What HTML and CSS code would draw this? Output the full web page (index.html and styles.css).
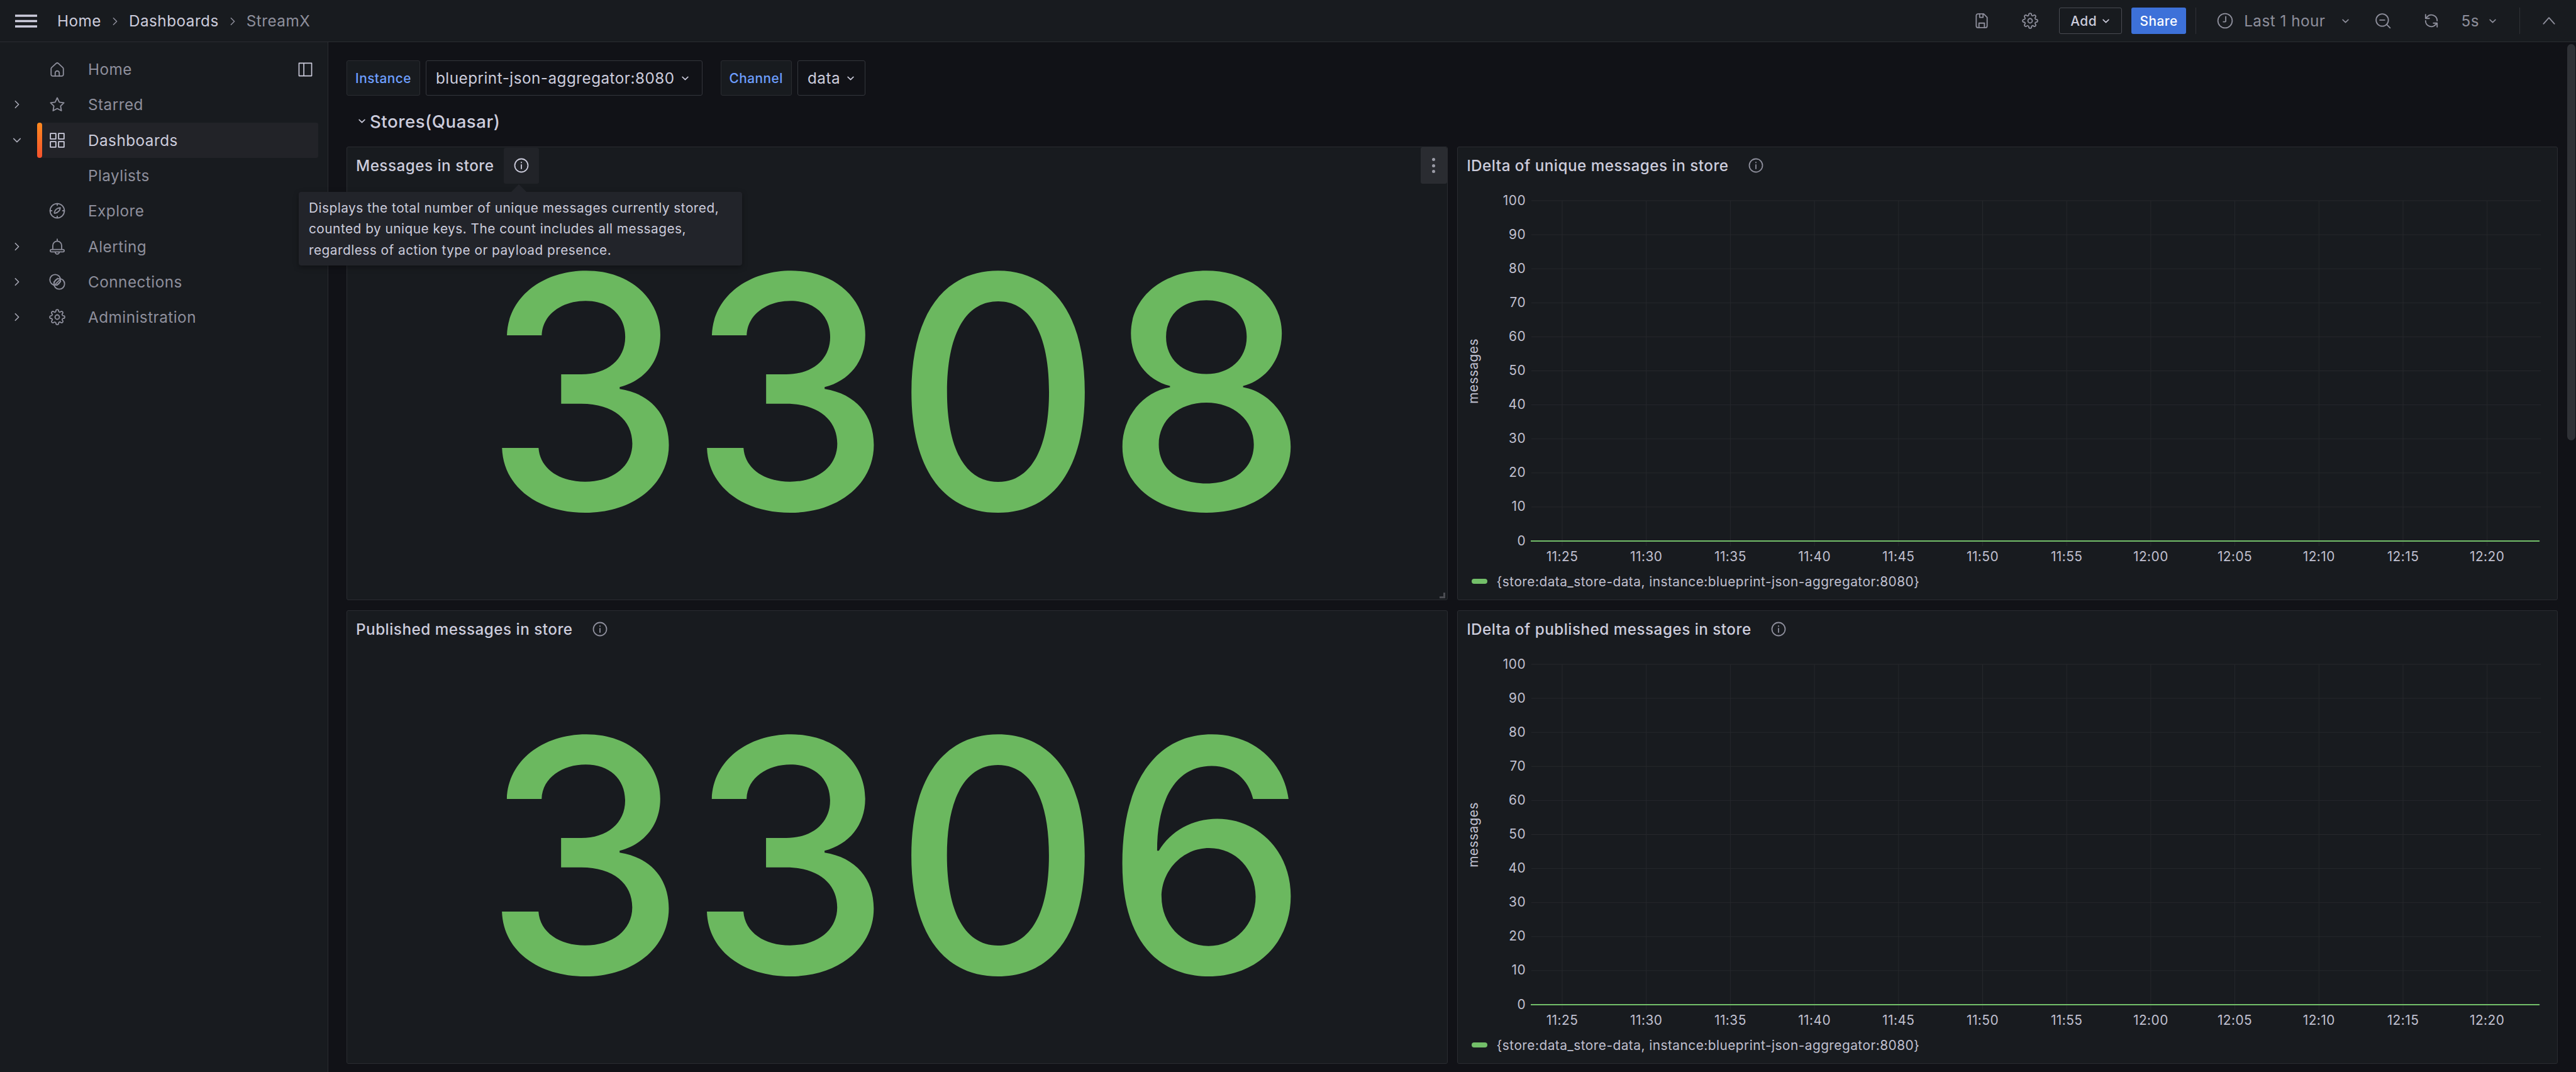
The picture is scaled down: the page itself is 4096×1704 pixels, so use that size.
FILE: index.html
```html
<!DOCTYPE html>
<html lang="en">
<head>
<meta charset="utf-8">
<title>StreamX - Dashboards</title>
<link rel="stylesheet" href="styles.css">
</head>
<body>
<svg class="sprite" aria-hidden="true">
  <symbol id="i-chev" viewBox="0 0 24 24"><path d="M5 8.5l7 7 7-7"/></symbol>
  <symbol id="i-right" viewBox="0 0 24 24"><path d="M8.5 5l7 7-7 7"/></symbol>
  <symbol id="i-up" viewBox="0 0 24 24"><path d="M4 16.5l8-9 8 9"/></symbol>
  <symbol id="i-info" viewBox="0 0 24 24"><circle cx="12" cy="12" r="10.5"/><path d="M12 11v6M12 7v.6"/></symbol>
  <symbol id="i-home" viewBox="0 0 24 24"><path d="M3.8 9.6l6.7-6.2a2.3 2.3 0 0 1 3 0l6.7 6.2a2.6 2.6 0 0 1 .8 1.9v8.3a2.2 2.2 0 0 1-2.2 2.2H5.2A2.2 2.2 0 0 1 3 19.8v-8.3a2.6 2.6 0 0 1 .8-1.9z"/><path d="M9 22v-4.500a3 3 0 0 1 6 0V22"/></symbol>
  <symbol id="i-star" viewBox="0 0 24 24"><path d="M12 2.300l3 6.300 6.800 1-4.900 4.800 1.200 6.800-6.100-3.200-6.100 3.200 1.200-6.800-4.900-4.800 6.800-1z"/></symbol>
  <symbol id="i-grid" viewBox="0 0 24 24"><path d="M2 2h8v8H2zM14 2h8v8h-8zM2 14h8v8H2zM14 14h8v8h-8z"/></symbol>
  <symbol id="i-compass" viewBox="0 0 24 24"><circle cx="12" cy="12" r="10.500"/><path d="M12 1.500v2.500M12 20v2.500M1.500 12H4M20 12h2.500"/><path d="M16.500 7.500c-.4 4.200-2.800 7-7.500 8.100-1.200.3-1.500-.3-1.200-1.200 1.200-4.300 4-6.500 8.700-6.900z"/></symbol>
  <symbol id="i-bell" viewBox="0 0 24 24"><path d="M12 1v3M5.500 16v-5.500a6.500 6.500 0 0 1 13 0V16"/><path d="M3.500 16.300h17a1.500 1.500 0 0 1 0 3.400h-17a1.500 1.500 0 0 1 0-3.400zM9 20a3 3 0 0 0 6 0"/></symbol>
  <symbol id="i-conn" viewBox="0 0 24 24"><circle cx="9" cy="9" r="7.800"/><circle cx="15" cy="15" r="7.800"/><path d="M9.200 15.600l6.400-6.400M7 12.500l5.500-5.500M11.500 17l5.500-5.500"/></symbol>
  <symbol id="i-gear" viewBox="0 0 24 24"><circle cx="12" cy="12" r="3.200"/><path d="M19.400 15a1.650 1.650 0 0 0 .33 1.820l.06.06a2 2 0 0 1 0 2.830 2 2 0 0 1-2.830 0l-.06-.06a1.650 1.650 0 0 0-1.820-.33 1.650 1.650 0 0 0-1 1.510V21a2 2 0 0 1-2 2 2 2 0 0 1-2-2v-.09A1.650 1.650 0 0 0 9 19.400a1.650 1.650 0 0 0-1.820.33l-.06.06a2 2 0 0 1-2.830 0 2 2 0 0 1 0-2.830l.06-.06a1.650 1.650 0 0 0 .33-1.820 1.650 1.650 0 0 0-1.510-1H3a2 2 0 0 1-2-2 2 2 0 0 1 2-2h.09A1.650 1.650 0 0 0 4.600 9a1.650 1.650 0 0 0-.33-1.820l-.06-.06a2 2 0 0 1 0-2.830 2 2 0 0 1 2.830 0l.06.06a1.650 1.650 0 0 0 1.820.33H9a1.650 1.650 0 0 0 1-1.510V3a2 2 0 0 1 2-2 2 2 0 0 1 2 2v.09a1.650 1.650 0 0 0 1 1.510 1.650 1.650 0 0 0 1.820-.33l.06-.06a2 2 0 0 1 2.830 0 2 2 0 0 1 0 2.830l-.06.06a1.650 1.650 0 0 0-.33 1.820V9a1.650 1.650 0 0 0 1.510 1H21a2 2 0 0 1 2 2 2 2 0 0 1-2 2h-.09a1.650 1.650 0 0 0-1.510 1z"/></symbol>
  <symbol id="i-save" viewBox="0 0 24 24"><path d="M4 4.500A2.500 2.500 0 0 1 6.500 2H15l5 5v12.500a2.500 2.500 0 0 1-2.500 2.500h-11A2.500 2.500 0 0 1 4 19.500z"/><path d="M8 22v-6.500h8V22M9 2v5h5V2"/></symbol>
  <symbol id="i-clock" viewBox="0 0 24 24"><circle cx="12" cy="12" r="10.500"/><path d="M13 6v6.500a1 1 0 0 1-1 1H9.500"/></symbol>
  <symbol id="i-zoomout" viewBox="0 0 24 24"><circle cx="11" cy="11" r="9"/><path d="M17.500 17.500l5 5M7.500 11h7"/></symbol>
  <symbol id="i-sync" viewBox="0 0 24 24"><path d="M20.500 12a8.500 8.500 0 0 0-14.800-5.700L3.500 8.500M3.500 3v5.500H9"/><path d="M3.500 12a8.500 8.500 0 0 0 14.800 5.700l2.200-2.200M20.500 21v-5.500H15"/></symbol>
  <symbol id="i-dock" viewBox="0 0 24 24"><path d="M1.500 1.500h21v21h-21zM9.500 1.500v21"/></symbol>
</svg>

<header class="topbar">
  <svg class="burger" viewBox="0 0 35 21"><path d="M0 2h35M0 10.500h35M0 19h35"/></svg>
  <nav class="crumbs">
    <span class="crumb">Home</span>
    <svg class="ico crumb-sep"><use href="#i-right"/></svg>
    <span class="crumb">Dashboards</span>
    <svg class="ico crumb-sep"><use href="#i-right"/></svg>
    <span class="crumb crumb-last">StreamX</span>
  </nav>
  <div class="tools">
    <svg class="ico tool"><use href="#i-save"/></svg>
    <svg class="ico tool ml51"><use href="#i-gear"/></svg>
    <span class="btn btn-add">Add <svg class="ico chev-sm light"><use href="#i-chev"/></svg></span>
    <span class="btn btn-share">Share</span>
    <span class="sep sep-a"></span>
    <svg class="ico tool ml33"><use href="#i-clock"/></svg>
    <span class="tool-text ml17">Last 1 hour</span>
    <svg class="ico chev-sm ml25"><use href="#i-chev"/></svg>
    <svg class="ico tool ml39"><use href="#i-zoomout"/></svg>
    <svg class="ico tool ml51"><use href="#i-sync"/></svg>
    <span class="tool-text ml34">5s</span>
    <svg class="ico chev-sm ml14"><use href="#i-chev"/></svg>
    <span class="sep sep-b"></span>
    <svg class="ico tool ml33"><use href="#i-up"/></svg>
  </div>
</header>

<div class="main">
  <aside class="sidebar">
    <div class="nav-row">
      <span class="caret"></span>
      <a class="nav-item"><svg class="ico nav-ico"><use href="#i-home"/></svg><span>Home</span><svg class="ico dock"><use href="#i-dock"/></svg></a>
    </div>
    <div class="nav-row">
      <span class="caret"><svg class="ico caret-ico"><use href="#i-right"/></svg></span>
      <a class="nav-item"><svg class="ico nav-ico"><use href="#i-star"/></svg><span>Starred</span></a>
    </div>
    <div class="nav-row">
      <span class="caret"><svg class="ico caret-ico"><use href="#i-chev"/></svg></span>
      <a class="nav-item nav-active"><svg class="ico nav-ico"><use href="#i-grid"/></svg><span>Dashboards</span></a>
    </div>
    <div class="nav-row">
      <span class="caret"></span>
      <a class="nav-item"><span class="nav-spacer"></span><span>Playlists</span></a>
    </div>
    <div class="nav-row">
      <span class="caret"></span>
      <a class="nav-item"><svg class="ico nav-ico"><use href="#i-compass"/></svg><span>Explore</span></a>
    </div>
    <div class="nav-row">
      <span class="caret"><svg class="ico caret-ico"><use href="#i-right"/></svg></span>
      <a class="nav-item"><svg class="ico nav-ico"><use href="#i-bell"/></svg><span>Alerting</span></a>
    </div>
    <div class="nav-row">
      <span class="caret"><svg class="ico caret-ico"><use href="#i-right"/></svg></span>
      <a class="nav-item"><svg class="ico nav-ico"><use href="#i-conn"/></svg><span>Connections</span></a>
    </div>
    <div class="nav-row">
      <span class="caret"><svg class="ico caret-ico"><use href="#i-right"/></svg></span>
      <a class="nav-item"><svg class="ico nav-ico"><use href="#i-gear"/></svg><span>Administration</span></a>
    </div>
  </aside>

  <main class="content">
    <div class="vars">
      <span class="var-label">Instance</span>
      <span class="var-value var-wide">blueprint-json-aggregator:8080<svg class="ico chev-sm"><use href="#i-chev"/></svg></span>
      <span class="var-label var-next">Channel</span>
      <span class="var-value">data<svg class="ico chev-sm"><use href="#i-chev"/></svg></span>
    </div>
    <div class="row-title"><svg class="ico chev-sm light"><use href="#i-chev"/></svg><span>Stores(Quasar)</span></div>

    <div class="grid">
      <section class="panel">
        <div class="panel-head">
          <h2 class="panel-title">Messages in store</h2>
          <span class="info info-hover"><svg class="ico info-ico"><use href="#i-info"/></svg></span>
          <span class="kebab"><i></i><i></i><i></i></span>
        </div>
        <div class="stat">3308</div>
        <span class="resize"></span>
      </section>

      <section class="panel">
        <div class="panel-head panel-head-chart">
          <h2 class="panel-title">lDelta of unique messages in store</h2>
          <span class="info"><svg class="ico info-ico dim"><use href="#i-info"/></svg></span>
        </div>
        <svg class="chart" viewBox="0 0 1748 613">
          <path class="gridline" d="M117 27H1722M117 81.100H1722M117 135.200H1722M117 189.300H1722M117 243.400H1722M117 297.500H1722M117 351.600H1722M117 405.700H1722M117 459.800H1722M117 513.900H1722M117 568H1722M166 27V576M299.700 27V576M433.400 27V576M567.100 27V576M700.800 27V576M834.500 27V576M968.200 27V576M1101.900 27V576M1235.600 27V576M1369.300 27V576M1503 27V576M1636.700 27V576"/>
          <path class="series" d="M116 568H1720"/>
          <g class="ylabels">
            <text x="108" y="34">100</text><text x="108" y="88">90</text><text x="108" y="142">80</text><text x="108" y="196">70</text><text x="108" y="250">60</text><text x="108" y="304">50</text><text x="108" y="358">40</text><text x="108" y="412">30</text><text x="108" y="466">20</text><text x="108" y="520">10</text><text x="108" y="575">0</text>
          </g>
          <text class="axis-name" transform="rotate(-90 32 298)" x="32" y="298">messages</text>
          <g class="xlabels">
            <text x="166" y="600">11:25</text><text x="299.700" y="600">11:30</text><text x="433.400" y="600">11:35</text><text x="567.100" y="600">11:40</text><text x="700.800" y="600">11:45</text><text x="834.500" y="600">11:50</text><text x="968.200" y="600">11:55</text><text x="1101.900" y="600">12:00</text><text x="1235.600" y="600">12:05</text><text x="1369.300" y="600">12:10</text><text x="1503" y="600">12:15</text><text x="1636.700" y="600">12:20</text>
          </g>
        </svg>
        <div class="legend"><span class="swatch"></span><span>{store:data_store-data, instance:blueprint-json-aggregator:8080}</span></div>
      </section>

      <section class="panel">
        <div class="panel-head">
          <h2 class="panel-title">Published messages in store</h2>
          <span class="info"><svg class="ico info-ico dim"><use href="#i-info"/></svg></span>
        </div>
        <div class="stat">3306</div>
      </section>

      <section class="panel">
        <div class="panel-head panel-head-chart">
          <h2 class="panel-title">lDelta of published messages in store</h2>
          <span class="info"><svg class="ico info-ico dim"><use href="#i-info"/></svg></span>
        </div>
        <svg class="chart" viewBox="0 0 1748 613">
          <path class="gridline" d="M117 27H1722M117 81.100H1722M117 135.200H1722M117 189.300H1722M117 243.400H1722M117 297.500H1722M117 351.600H1722M117 405.700H1722M117 459.800H1722M117 513.900H1722M117 568H1722M166 27V576M299.700 27V576M433.400 27V576M567.100 27V576M700.800 27V576M834.500 27V576M968.200 27V576M1101.900 27V576M1235.600 27V576M1369.300 27V576M1503 27V576M1636.700 27V576"/>
          <path class="series" d="M116 568H1720"/>
          <g class="ylabels">
            <text x="108" y="34">100</text><text x="108" y="88">90</text><text x="108" y="142">80</text><text x="108" y="196">70</text><text x="108" y="250">60</text><text x="108" y="304">50</text><text x="108" y="358">40</text><text x="108" y="412">30</text><text x="108" y="466">20</text><text x="108" y="520">10</text><text x="108" y="575">0</text>
          </g>
          <text class="axis-name" transform="rotate(-90 32 298)" x="32" y="298">messages</text>
          <g class="xlabels">
            <text x="166" y="600">11:25</text><text x="299.700" y="600">11:30</text><text x="433.400" y="600">11:35</text><text x="567.100" y="600">11:40</text><text x="700.800" y="600">11:45</text><text x="834.500" y="600">11:50</text><text x="968.200" y="600">11:55</text><text x="1101.900" y="600">12:00</text><text x="1235.600" y="600">12:05</text><text x="1369.300" y="600">12:10</text><text x="1503" y="600">12:15</text><text x="1636.700" y="600">12:20</text>
          </g>
        </svg>
        <div class="legend"><span class="swatch"></span><span>{store:data_store-data, instance:blueprint-json-aggregator:8080}</span></div>
      </section>
    </div>
  </main>
</div>

<div class="tooltip">
  <span class="tooltip-arrow"></span>
  <p class="tooltip-line">Displays the total number of unique messages currently stored,</p>
  <p class="tooltip-line">counted by unique keys. The count includes all messages,</p>
  <p class="tooltip-line">regardless of action type or payload presence.</p>
</div>
<div class="scroll-thumb"></div>
</body>
</html>
```

FILE: styles.css
```css
* { box-sizing: border-box; }
html, body { margin: 0; height: 100%; }
body {
  width: 4096px;
  height: 1704px;
  overflow: hidden;
  background: #111217;
  color: #ccccdc;
  font-family: Inter, "Liberation Sans", sans-serif;
  font-size: 24.27px;
  letter-spacing: .02em;
  display: flex;
  flex-direction: column;
  position: relative;
}
.sprite { display: none; }
.ico { fill: none; stroke: currentColor; stroke-width: 1.7; stroke-linecap: round; stroke-linejoin: round; flex: none; }

/* top bar */
.topbar {
  height: 67px;
  flex: none;
  display: flex;
  align-items: center;
  background: #181b1f;
  border-bottom: 1px solid #2a2c31;
  padding-left: 24px;
}
.burger { width: 35px; height: 21px; fill: none; stroke: #ccccdc; stroke-width: 3.600; stroke-linecap: round; flex: none; }
.crumbs { display: flex; align-items: center; margin-left: 32px; }
.crumb { color: #ccccdc; }
.crumb-last { color: #8e8f9c; }
.crumb-sep { width: 18px; height: 18px; margin: 2px 13px 0; color: #8e8f9c; stroke-width: 2; }
.tools { margin-left: auto; padding-right: 30px; display: flex; align-items: center; color: #8e8f9c; }
.tool { width: 26px; height: 26px; }
.tool-text { color: #8e8f9c; }
.ml14 { margin-left: 14px; }
.ml17 { margin-left: 17px; }
.ml25 { margin-left: 25px; }
.ml33 { margin-left: 33px; }
.ml34 { margin-left: 34px; }
.ml39 { margin-left: 39px; }
.ml51 { margin-left: 51px; }
.chev-sm { width: 15px; height: 15px; stroke-width: 2.600; }
.light { color: #ccccdc; }
.btn {
  height: 42px;
  display: inline-flex;
  align-items: center;
  justify-content: center;
  font-size: 20.800px;
  font-weight: 500;
  border-radius: 3px;
}
.btn-add { width: 100px; margin-left: 33px; gap: 7px; color: #ccccdc; border: 1px solid #494b52; }
.btn-share { width: 87px; margin-left: 15px; color: #fff; background: #3d71d9; }
.sep { width: 1px; height: 42px; background: #2f3136; }
.sep-a { margin-left: 15px; }
.sep-b { margin-left: 35px; }

/* layout */
.main { flex: 1; display: flex; min-height: 0; }
.sidebar {
  width: 522px;
  flex: none;
  background: #181b1f;
  border-right: 1px solid #2a2c31;
  padding-top: 15px;
}
.nav-row { height: 56.300px; display: flex; align-items: center; }
.caret { width: 59px; flex: none; display: flex; justify-content: center; padding-right: 6px; color: #a7a8b5; }
.caret-ico { width: 18px; height: 18px; stroke-width: 2.200; }
.nav-item {
  flex: 1;
  height: 100%;
  margin-right: 15px;
  padding: 0 9px 0 19px;
  display: flex;
  align-items: center;
  gap: 36px;
  color: #8e8f9c;
  border-radius: 3px;
  position: relative;
}
.nav-ico { width: 26px; height: 26px; }
.nav-spacer { width: 26px; flex: none; }
.dock { width: 23px; height: 23px; margin-left: auto; color: #ccccdc; }
.nav-active { background: #222328; color: #ccccdc; }
.nav-active::before {
  content: "";
  position: absolute;
  left: 0;
  top: 0;
  bottom: 0;
  width: 7.500px;
  border-radius: 4px;
  background: linear-gradient(#ff8a1f, #f5522d);
}

.content { flex: 1; min-width: 0; padding: 29px 29px 0; }
.vars { display: flex; height: 56px; gap: 9px; }
.var-label, .var-value {
  display: flex;
  align-items: center;
  border: 1px solid #2a2c31;
  border-radius: 3px;
}
.var-label { padding: 0 13px; font-size: 20.800px; font-weight: 500; color: #6e9fff; background: #181b1f; }
.var-next { margin-left: 20px; }
.var-value { padding: 0 15px; gap: 9px; background: #111217; border-color: #34363c; }
.var-wide { padding-right: 19px; }
.row-title {
  height: 81px;
  display: flex;
  align-items: center;
  gap: 5px;
  padding-left: 17px;
  font-size: 27.700px;
  font-weight: 500;
}

.grid { display: grid; grid-template-columns: 1fr 1fr; grid-template-rows: 721px 721px; column-gap: 15px; row-gap: 16px; }
.panel {
  background: #181b1f;
  border: 1px solid #2a2c31;
  border-radius: 3px;
  display: flex;
  flex-direction: column;
  min-width: 0;
  position: relative;
  overflow: hidden;
}
.panel-head { height: 58px; flex: none; display: flex; align-items: center; padding-left: 14px; position: relative; }
.panel-head-chart { padding-left: 15px; }
.panel-title { margin: 0; font-size: 24.270px; font-weight: 500; color: #ccccdc; }
.info { width: 56px; height: 57px; margin-left: 15px; display: flex; align-items: center; justify-content: center; border-radius: 3px; }
.info-hover { background: #212328; }
.info-ico { width: 24px; height: 24px; stroke-width: 1.800; }
.dim { color: #8e8f9c; }
.kebab {
  position: absolute;
  top: 0;
  right: 0;
  width: 42px;
  height: 58px;
  background: #2a2c31;
  border-radius: 3px;
  display: flex;
  flex-direction: column;
  align-items: center;
  justify-content: center;
  gap: 4.500px;
}
.kebab i { width: 5px; height: 5px; border-radius: 50%; background: #9a9ba6; }
.stat {
  flex: 1;
  display: flex;
  align-items: center;
  justify-content: center;
  font-size: 515px;
  line-height: 1;
  letter-spacing: 3px;
  color: #6bb85f;
  font-weight: 500;
}
.resize { position: absolute; right: 3px; bottom: 2px; width: 9px; height: 9px; border-right: 3px solid #4b4c52; border-bottom: 3px solid #4b4c52; }
.chart { display: block; width: 1748px; height: 613px; flex: none; }
.gridline { stroke: #26282c; stroke-width: 1; fill: none; }
.series { stroke: #73bf69; stroke-width: 1.800; fill: none; }
.chart text { font-family: Inter, "Liberation Sans", sans-serif; font-size: 20.800px; fill: #c0c0d0; }
.ylabels text { text-anchor: end; }
.xlabels text { text-anchor: middle; }
.chart .axis-name { text-anchor: middle; }
.legend { height: 38px; display: flex; align-items: center; padding-left: 22px; gap: 15px; font-size: 20.800px; color: #c0c0d0; }
.swatch { width: 25px; height: 8px; border-radius: 4px; background: #73bf69; }

/* overlays */
.tooltip {
  position: absolute;
  left: 475px;
  top: 305px;
  width: 705px;
  height: 117px;
  padding: 9px 16px;
  background: #22242a;
  border-radius: 4px;
  font-size: 20.800px;
  color: #ccccdc;
  box-shadow: 0 3px 8px rgba(0, 0, 0, .35);
}
.tooltip-line { margin: 0; height: 33.400px; line-height: 33.400px; white-space: nowrap; overflow: hidden; }
.tooltip-arrow {
  position: absolute;
  left: 338px;
  top: -12px;
  border-left: 12px solid transparent;
  border-right: 12px solid transparent;
  border-bottom: 12px solid #22242a;
}
.scroll-thumb {
  position: absolute;
  right: 1px;
  top: 70px;
  width: 13px;
  height: 630px;
  background: #2f3136;
  border-radius: 7px;
}
```
